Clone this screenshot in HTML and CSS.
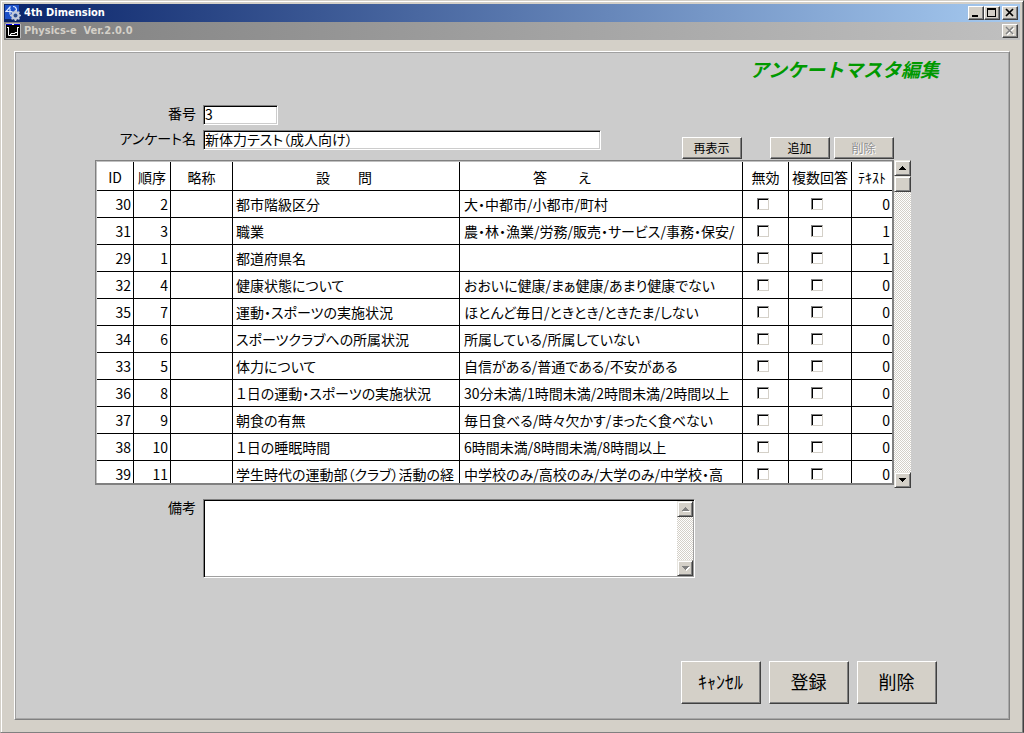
FILE: index.html
```html
<!DOCTYPE html>
<html lang="ja">
<head>
<meta charset="utf-8">
<title>4th Dimension</title>
<link rel="stylesheet" href="styles.css">
</head>
<body>
<div class="window">
  <header class="titlebar">
    <svg class="app-icon" viewBox="0 0 16 16" aria-hidden="true">
      <path fill="#1c50c8" d="M0 0h14v14H0z"/>
      <path fill="none" stroke="#dce8ff" stroke-width="1.2" d="M5.500 1.500L1 6.500h6M5 3.500v6M8 1.500c4 0 4.500 5 1.500 6"/>
      <circle cx="10.500" cy="10.500" r="3.200" fill="none" stroke="#c4ccd8" stroke-width="2.400"/>
      <path stroke="#c4ccd8" stroke-width="1.600" d="M10.500 5v2M10.500 14v2M5 10.500h2M14 10.500h2M6.600 6.600L8 8M13 13l1.400 1.400M14.400 6.600L13 8M8 13l-1.400 1.400"/>
      <circle cx="10.500" cy="10.500" r="1.600" fill="#385078"/>
    </svg>
    <h1 class="caption">4th Dimension</h1>
    <button class="sys" type="button" aria-label="最小化"><svg viewBox="0 0 12 10"><path fill="#000" d="M2 7h6v2H2z"/></svg></button>
    <button class="sys" type="button" aria-label="最大化"><svg viewBox="0 0 12 10"><path fill="#000" fill-rule="evenodd" d="M1 0h9v9H1zM2 2h7v6H2z"/></svg></button>
    <button class="sys sys-close" type="button" aria-label="閉じる"><svg viewBox="0 0 12 10"><path stroke="#000" stroke-width="1.700" d="M2 1l7 7M9 1L2 8"/></svg></button>
  </header>
  <div class="titlebar titlebar-inactive">
    <svg class="app-icon" viewBox="0 0 16 16" aria-hidden="true">
      <path fill="#000" d="M0 0h16v16H0z"/>
      <path fill="none" stroke="#b8b8b8" d="M.5.5h15v15H.5z"/>
      <path fill="#0000e8" d="M1 1h14v1H1z"/>
      <path fill="#fff" d="M7 1h2v1H7z"/>
      <path fill="none" stroke="#fff" d="M2 4.500h2M12 4.500h2M3.500 4v8.500h9V4M5 11.500h1v-1h4v-1h2"/>
    </svg>
    <h2 class="caption">Physics-e&nbsp; Ver.2.0.0</h2>
    <button class="sys sys-close" type="button" disabled aria-label="閉じる"><svg viewBox="0 0 12 10"><path stroke="#fff" stroke-width="1.500" d="M3 2l7 7M10 2L3 9"/><path stroke="#808080" stroke-width="1.500" d="M2 1l7 7M9 1L2 8"/></svg></button>
  </div>

  <main class="panel">
    <h2 class="page-title">アンケートマスタ編集</h2>

    <div class="head">
      <div class="fields">
        <label for="no">番号</label><input class="field field-no" id="no" type="text" value="3">
        <label for="name">アンケート名</label><input class="field" id="name" type="text" value="新体力テスト（成人向け）">
      </div>
      <div class="tools">
        <button class="btn tool-refresh" type="button">再表示</button>
        <button class="btn" type="button">追加</button>
        <button class="btn" type="button" disabled>削除</button>
      </div>
    </div>

    <div class="list">
      <div class="list-view">
        <table>
          <colgroup><col class="c-id"><col class="c-id"><col class="c-abbr"><col class="c-q"><col><col class="c-off"><col class="c-multi"><col class="c-text"></colgroup>
          <thead>
            <tr><th>ID</th><th>順序</th><th>略称</th><th class="th-question">設　　問</th><th class="th-answer">答　　 え</th><th>無効</th><th>複数回答</th><th>ﾃｷｽﾄ</th></tr>
          </thead>
          <tbody>
            <tr><td class="num">30</td><td class="num">2</td><td></td><td>都市階級区分</td><td>大・中都市/小都市/町村</td><td class="chk"><input type="checkbox" aria-label="無効"></td><td class="chk"><input type="checkbox" aria-label="複数回答"></td><td class="num">0</td></tr>
            <tr><td class="num">31</td><td class="num">3</td><td></td><td>職業</td><td>農・林・漁業/労務/販売・サービス/事務・保安/</td><td class="chk"><input type="checkbox" aria-label="無効"></td><td class="chk"><input type="checkbox" aria-label="複数回答"></td><td class="num">1</td></tr>
            <tr><td class="num">29</td><td class="num">1</td><td></td><td>都道府県名</td><td></td><td class="chk"><input type="checkbox" aria-label="無効"></td><td class="chk"><input type="checkbox" aria-label="複数回答"></td><td class="num">1</td></tr>
            <tr><td class="num">32</td><td class="num">4</td><td></td><td>健康状態について</td><td>おおいに健康/まぁ健康/あまり健康でない</td><td class="chk"><input type="checkbox" aria-label="無効"></td><td class="chk"><input type="checkbox" aria-label="複数回答"></td><td class="num">0</td></tr>
            <tr><td class="num">35</td><td class="num">7</td><td></td><td>運動・スポーツの実施状況</td><td>ほとんど毎日/ときとき/ときたま/しない</td><td class="chk"><input type="checkbox" aria-label="無効"></td><td class="chk"><input type="checkbox" aria-label="複数回答"></td><td class="num">0</td></tr>
            <tr><td class="num">34</td><td class="num">6</td><td></td><td>スポーツクラブへの所属状況</td><td>所属している/所属していない</td><td class="chk"><input type="checkbox" aria-label="無効"></td><td class="chk"><input type="checkbox" aria-label="複数回答"></td><td class="num">0</td></tr>
            <tr><td class="num">33</td><td class="num">5</td><td></td><td>体力について</td><td>自信がある/普通である/不安がある</td><td class="chk"><input type="checkbox" aria-label="無効"></td><td class="chk"><input type="checkbox" aria-label="複数回答"></td><td class="num">0</td></tr>
            <tr><td class="num">36</td><td class="num">8</td><td></td><td>１日の運動・スポーツの実施状況</td><td>30分未満/1時間未満/2時間未満/2時間以上</td><td class="chk"><input type="checkbox" aria-label="無効"></td><td class="chk"><input type="checkbox" aria-label="複数回答"></td><td class="num">0</td></tr>
            <tr><td class="num">37</td><td class="num">9</td><td></td><td>朝食の有無</td><td>毎日食べる/時々欠かす/まったく食べない</td><td class="chk"><input type="checkbox" aria-label="無効"></td><td class="chk"><input type="checkbox" aria-label="複数回答"></td><td class="num">0</td></tr>
            <tr><td class="num">38</td><td class="num">10</td><td></td><td>１日の睡眠時間</td><td>6時間未満/8時間未満/8時間以上</td><td class="chk"><input type="checkbox" aria-label="無効"></td><td class="chk"><input type="checkbox" aria-label="複数回答"></td><td class="num">0</td></tr>
            <tr><td class="num">39</td><td class="num">11</td><td></td><td>学生時代の運動部（クラブ）活動の経</td><td>中学校のみ/高校のみ/大学のみ/中学校・高</td><td class="chk"><input type="checkbox" aria-label="無効"></td><td class="chk"><input type="checkbox" aria-label="複数回答"></td><td class="num">0</td></tr>
          </tbody>
        </table>
      </div>
      <div class="scrollbar">
        <button class="scroll-btn" type="button" aria-label="上へ"><svg viewBox="0 0 7 4"><path d="M3 0h1v1h1v1h1v1h1v1H0V3h1V2h1V1h1z"/></svg></button>
        <div class="thumb"></div>
        <button class="scroll-btn scroll-down" type="button" aria-label="下へ"><svg viewBox="0 0 7 4"><path d="M0 0h7v1H6v1H5v1H4v1H3V3H2V2H1V1H0z"/></svg></button>
      </div>
    </div>

    <div class="memo">
      <label for="memo">備考</label>
      <div class="memo-box">
        <textarea id="memo"></textarea>
        <div class="scrollbar">
          <button class="scroll-btn" type="button" disabled aria-label="上へ"><svg viewBox="0 0 7 4"><path d="M3 0h1v1h1v1h1v1h1v1H0V3h1V2h1V1h1z"/></svg></button>
          <button class="scroll-btn scroll-down" type="button" disabled aria-label="下へ"><svg viewBox="0 0 7 4"><path d="M0 0h7v1H6v1H5v1H4v1H3V3H2V2H1V1H0z"/></svg></button>
        </div>
      </div>
    </div>

    <footer class="actions">
      <button class="btn" type="button">ｷｬﾝｾﾙ</button>
      <button class="btn" type="button">登録</button>
      <button class="btn" type="button">削除</button>
    </footer>
  </main>
</div>
</body>
</html>
```

FILE: styles.css
```css
* {
  box-sizing: border-box;
}

body {
  margin: 0;
  background: #d4d0c8;
  color: #000;
  font: 400 14px/20px "Noto Sans CJK JP", sans-serif;
  font-feature-settings: "palt";
}

h1,
h2 {
  margin: 0;
}

button,
input,
textarea {
  margin: 0;
  border-radius: 0;
  color: inherit;
  font: inherit;
  font-feature-settings: inherit;
}

/* Window frame */
.window {
  display: flex;
  flex-direction: column;
  min-height: 100vh;
  padding: 2px;
  border: 1px solid;
  border-color: #d4d0c8 #404040 #808080 #d4d0c8;
  box-shadow: inset 1px 1px #fff, inset -1px 0 #808080;
}

.titlebar {
  display: flex;
  align-items: center;
  height: 18px;
  margin: 1px 1px 0;
  padding: 0 2px 0 1px;
  background: linear-gradient(to right, #0a246a, #a6caf0);
  color: #fff;
}

.titlebar-inactive {
  margin-top: 0;
  background: linear-gradient(to right, #808080, #c0c0c0);
  color: #d4d0c8;
}

.app-icon {
  width: 16px;
  height: 16px;
  margin-right: 3px;
}

.caption {
  flex: 1;
  font: bold 11px/18px "DejaVu Sans Condensed", "DejaVu Sans", sans-serif;
}

.sys {
  width: 16px;
  height: 14px;
  padding: 1px;
  border: 1px solid;
  border-color: #fff #404040 #404040 #fff;
  background: #d4d0c8;
  box-shadow: inset -1px -1px #808080;
}

.sys svg {
  display: block;
  width: 12px;
  height: 10px;
}

.sys-close {
  margin-left: 2px;
}

/* Form panel */
.panel {
  display: flex;
  flex: 1;
  flex-direction: column;
  margin: 11px 11px 10px;
  padding: 5px 98px 15px 80px;
  border: 1px solid;
  border-color: #fff #808080 #808080 #fff;
  background: #ccc;
  box-shadow: inset 1px 1px #a0a0a0, inset -1px -1px #a8a8a8;
}

.page-title {
  margin-right: -28px;
  color: #009900;
  font: italic bold 19px/24px "Noto Sans CJK JP", sans-serif;
  font-feature-settings: normal;
  text-align: right;
}

.head {
  display: flex;
  justify-content: space-between;
  margin-top: 24px;
}

.fields {
  display: grid;
  flex: 0 1 506px;
  grid-template-columns: 101px 1fr;
  gap: 5px 7px;
  padding-bottom: 10px;
}

.fields label,
.memo label {
  line-height: 16px;
  text-align: right;
}

.field {
  width: 100%;
  height: 20px;
  padding: 0 0 2px 1px;
  border: 1px solid;
  border-color: #808080 #fff #fff #808080;
  background: #fff;
  box-shadow: inset 1px 1px #000, inset -1px -1px #ccc;
  line-height: 16px;
}

.field-no {
  width: 75px;
}

.tools {
  display: flex;
  align-items: flex-end;
  gap: 4px;
  margin-right: 17px;
  padding-bottom: 1px;
}

.btn {
  width: 60px;
  height: 22px;
  padding: 0 1px 0 0;
  border: 1px solid;
  border-color: #fff #404040 #404040 #fff;
  background: #d4d0c8;
  box-shadow: inset -1px -1px #808080;
  font-size: 12px;
  line-height: 18px;
}

.btn:disabled {
  color: #909090;
  text-shadow: 1px 1px #fff;
}

.tool-refresh {
  margin-right: 24px;
}

/* Question list */
.list {
  display: flex;
}

.list-view {
  flex: 1;
  height: 325px;
  overflow: hidden;
  border: 1px solid #808080;
  border-width: 1px 2px 2px 1px;
  background: #fff;
  box-shadow: inset 1px 1px #c0c0c0;
  padding: 1px 0 0 1px;
}

table {
  width: 100%;
  border-collapse: separate;
  border-spacing: 0;
  table-layout: fixed;
}

th,
td {
  height: 27px;
  padding: 0 0 0 3px;
  overflow: hidden;
  border: 0 solid #000;
  border-width: 0 1px 1px 0;
  font-weight: 400;
  text-align: left;
  white-space: nowrap;
}

th:last-child,
td:last-child {
  border-right: 0;
}

th {
  height: 29px;
  padding: 1px 0 0;
  text-align: center;
}

td:nth-child(5) {
  padding-left: 4px;
}

.th-question {
  padding-right: 4px;
}

.th-answer {
  padding-right: 78px;
}

.num {
  padding: 0 2px 0 0;
  text-align: right;
}

.chk {
  padding: 0 6px 0 0;
  text-align: center;
}

.chk input {
  display: block;
  width: 12px;
  height: 12px;
  margin: 0 auto;
  appearance: none;
  border: 1px solid;
  border-color: #808080 #d4d0c8 #d4d0c8 #808080;
  background: #fff;
  box-shadow: inset 1px 1px #000;
}

.c-id {
  width: 37px;
}

.c-abbr {
  width: 62px;
}

.c-q {
  width: 227px;
}

.c-off {
  width: 46px;
}

.c-multi {
  width: 63px;
}

.c-text {
  width: 40px;
}

/* Scroll bars */
.scrollbar {
  display: flex;
  flex-direction: column;
  width: 16px;
  background: repeating-conic-gradient(#fff 0 25%, #d4d0c8 0 50%) 0 0 / 2px 2px;
}

.list .scrollbar {
  width: 17px;
  margin-bottom: -3px;
}

.scroll-btn,
.thumb {
  height: 16px;
  border: 1px solid;
  border-color: #e8e6e0 #404040 #404040 #e8e6e0;
  background: #d4d0c8;
  box-shadow: inset 1px 1px #fff, inset -1px -1px #808080;
}

.scroll-btn {
  display: grid;
  width: 100%;
  padding: 0;
  place-items: center;
}

.scroll-btn svg {
  width: 7px;
  height: 4px;
}

.scroll-btn:disabled svg {
  fill: #808080;
  filter: drop-shadow(1px 1px #fff);
}

.scroll-down {
  margin-top: auto;
}

/* Remarks */
.memo {
  display: grid;
  grid-template-columns: 101px minmax(0, 492px);
  gap: 7px;
  margin-top: 14px;
}

.memo-box {
  display: flex;
  height: 79px;
  border: 1px solid;
  border-color: #808080 #fff #fff #808080;
  background: #fff;
  box-shadow: inset 1px 1px #000, inset -1px -1px #a0a0a0;
  padding: 1px;
}

.memo-box textarea {
  flex: 1;
  border: 0;
  background: transparent;
  resize: none;
}

/* Bottom buttons */
.actions {
  display: flex;
  justify-content: flex-end;
  gap: 8px;
  margin-top: auto;
  margin-right: -26px;
}

.actions .btn {
  width: 80px;
  height: 43px;
  padding-bottom: 4px;
  font-size: 18px;
  line-height: 24px;
}
```
